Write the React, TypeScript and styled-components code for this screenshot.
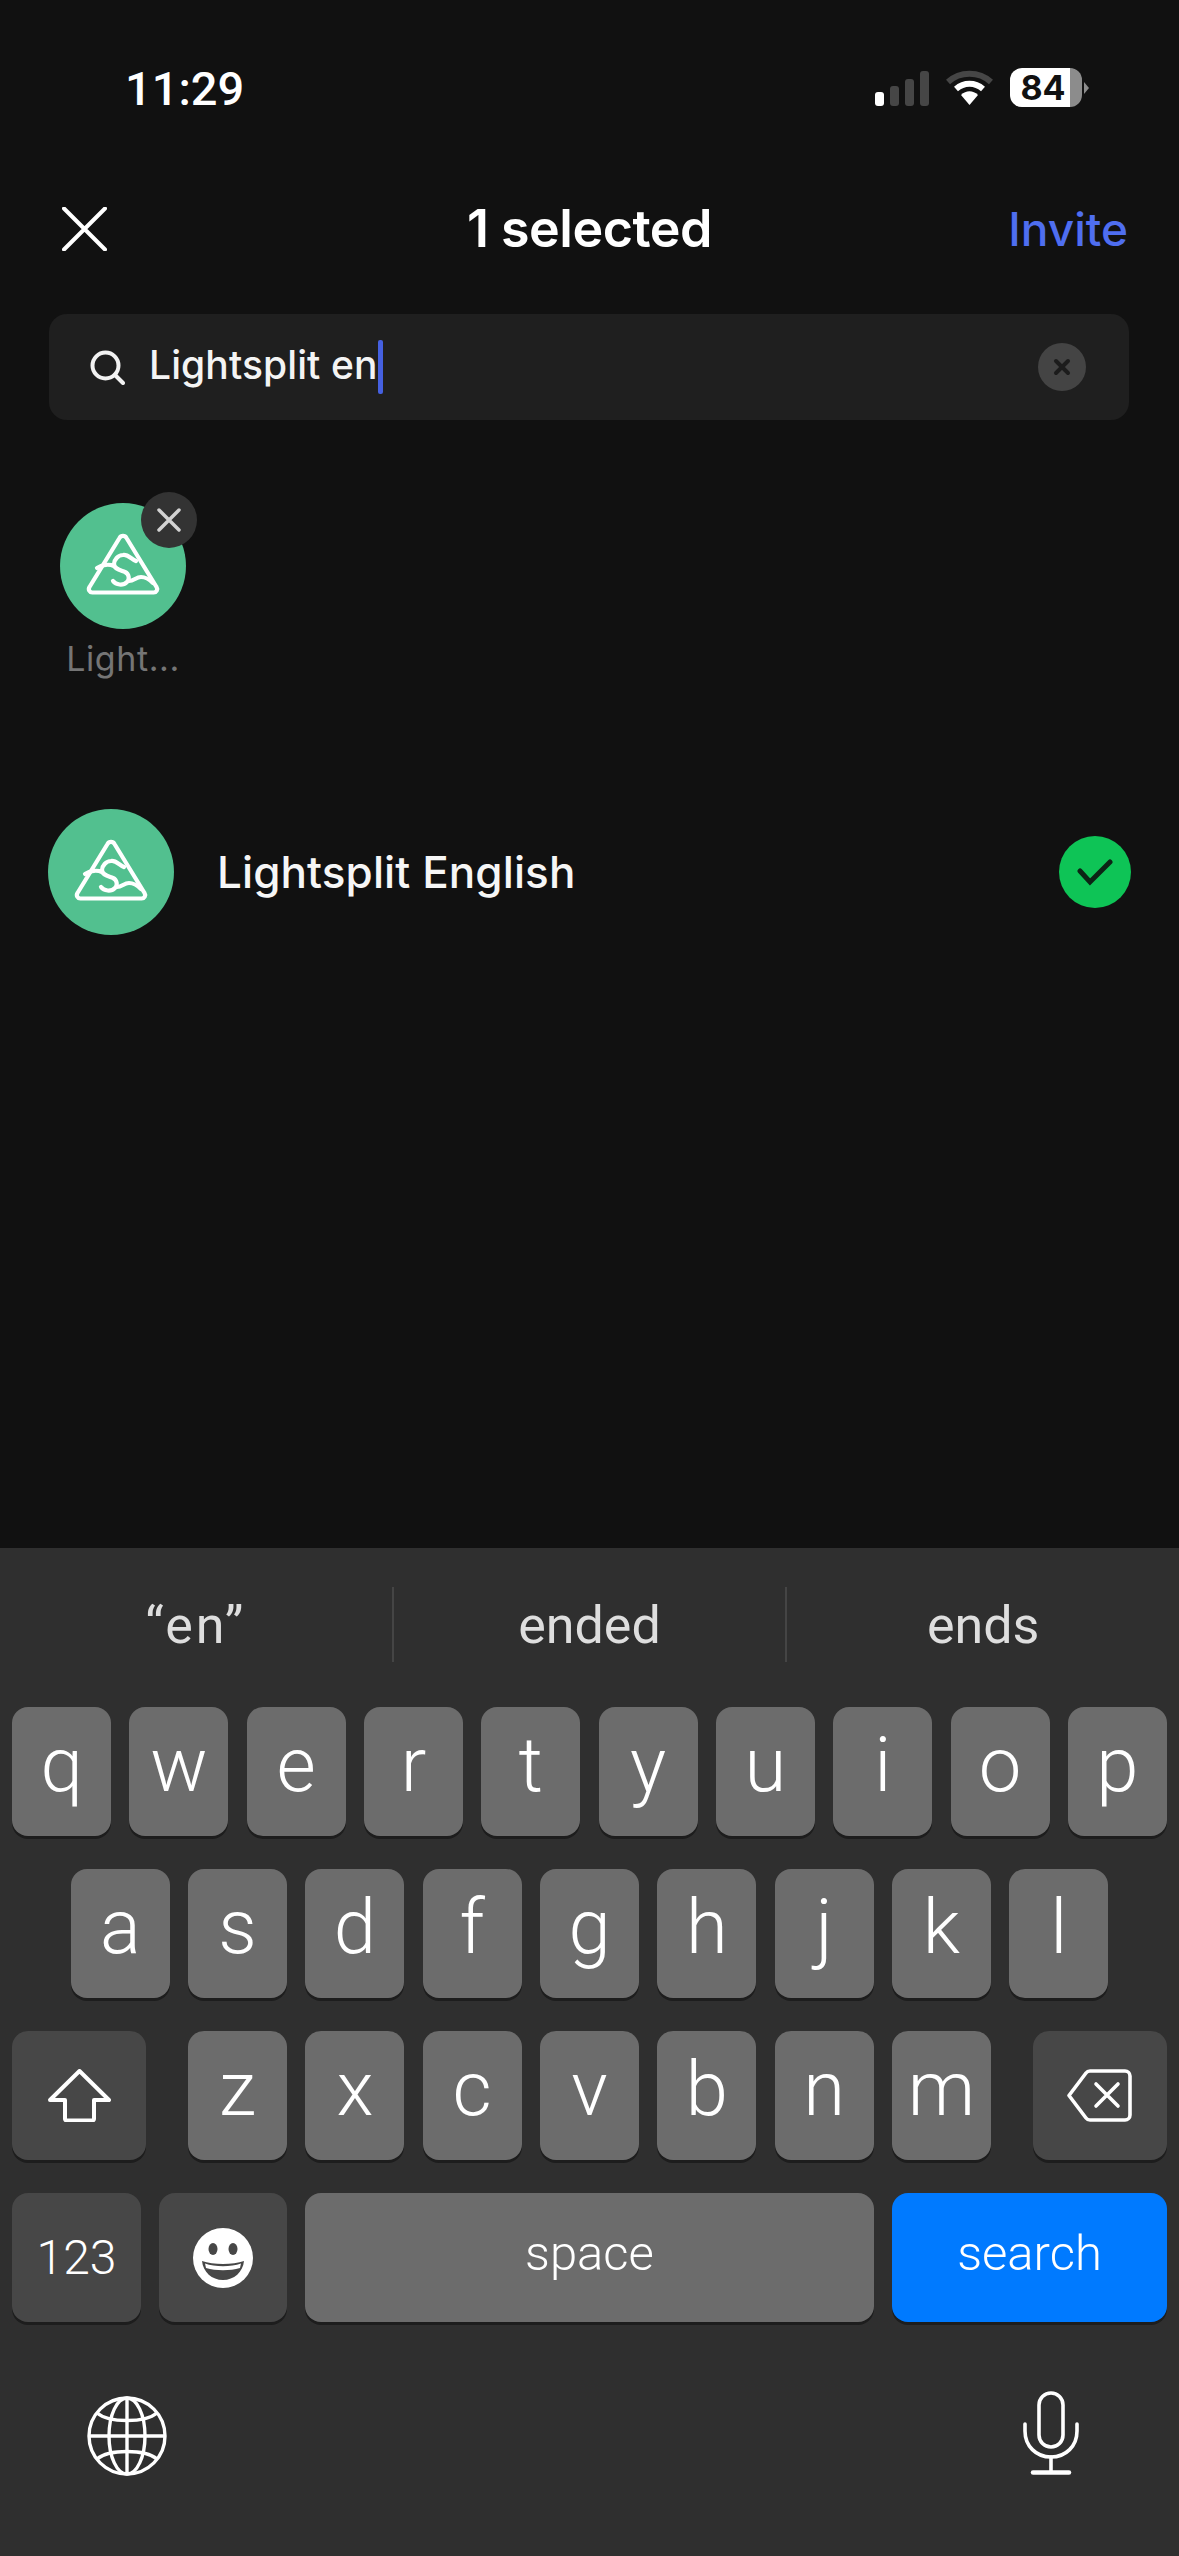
import React from 'react';
import styled, { createGlobalStyle } from 'styled-components';

const GlobalStyle = createGlobalStyle`
  html, body {
    margin: 0;
    padding: 0;
    background: #111111;
  }
  * {
    box-sizing: border-box;
  }
`;

const Page = styled.div`
  width: 1179px;
  height: 2556px;
  display: flex;
  flex-direction: column;
  overflow: hidden;
  background: #111111;
  color: #ffffff;
  font-family: 'Inter', 'Liberation Sans', sans-serif;
`;

const StatusBar = styled.div`
  height: 197px;
  padding: 68px 97px 0 125px;
  display: flex;
  justify-content: space-between;
  align-items: flex-start;
`;

const Clock = styled.div`
  font-family: 'Roboto', sans-serif;
  font-size: 47px;
  font-weight: 500;
  line-height: 41px;
`;

const StatusIcons = styled.div`
  display: flex;
  align-items: center;
  height: 39px;
  gap: 17px;
`;

const Signal = styled.div`
  display: flex;
  align-items: flex-end;
  gap: 6px;
  height: 35px;
  margin-top: 2px;
`;

const SignalBar = styled.div<{ $height: number; $on?: boolean }>`
  width: 9px;
  height: ${p => p.$height}px;
  border-radius: 3px;
  background: ${p => (p.$on ? '#ffffff' : '#464646')};
`;

const Battery = styled.div`
  position: relative;
  width: 72px;
  height: 39px;
  border-radius: 12px;
  background: linear-gradient(to right, #ffffff 0, #ffffff 60px, #8c8c8c 60px);
  color: #111111;
  font-family: 'Inter', sans-serif;
  font-size: 34px;
  font-weight: 700;
  line-height: 39px;
  text-align: center;
  padding-right: 6px;

  &::after {
    content: '';
    position: absolute;
    left: 74px;
    top: 14px;
    border-left: 5px solid #8c8c8c;
    border-top: 6px solid transparent;
    border-bottom: 6px solid transparent;
  }
`;

const Header = styled.div`
  height: 60px;
  padding: 0 51px 2px;
  display: grid;
  grid-template-columns: 1fr auto 1fr;
  align-items: center;
`;

const CloseIcon = styled.svg`
  margin-left: 11px;
`;

const Title = styled.div`
  font-size: 52px;
  font-weight: 600;
  letter-spacing: -0.5px;
`;

const InviteLink = styled.div`
  justify-self: end;
  font-size: 46px;
  font-weight: 500;
  color: #4f6ef0;
`;

const SearchBar = styled.div`
  margin: 57px 50px 0 49px;
  height: 106px;
  padding: 0 43px 0 41px;
  display: flex;
  align-items: center;
  border-radius: 18px;
  background: #1f1f1f;
`;

const SearchText = styled.div`
  margin-left: 24px;
  padding-bottom: 5px;
  font-size: 39px;
  font-weight: 500;
  letter-spacing: 0.1px;
  color: #f4f4f4;
`;

const Caret = styled.div`
  width: 5px;
  height: 54px;
  border-radius: 2px;
  background: #4560e0;
`;

const ClearButton = styled.div`
  margin-left: auto;
  width: 48px;
  height: 48px;
  border-radius: 50%;
  background: #444444;
  display: flex;
  align-items: center;
  justify-content: center;
`;

const Chips = styled.div`
  padding: 83px 0 0 60px;
  height: 389px;
`;

const Chip = styled.div`
  position: relative;
  width: 126px;
  display: flex;
  flex-direction: column;
  align-items: center;
`;

const ChipLabel = styled.div`
  margin-top: 10px;
  font-size: 34px;
  line-height: 40px;
  color: #757575;
  letter-spacing: 0.6px;
  white-space: nowrap;
`;

const RemoveBadge = styled.div`
  position: absolute;
  left: 81px;
  top: -11px;
  width: 56px;
  height: 56px;
  border-radius: 50%;
  background: #333333;
  display: flex;
  align-items: center;
  justify-content: center;
`;

const ResultRow = styled.div`
  padding: 0 48px;
  height: 126px;
  display: flex;
  align-items: center;
`;

const ResultName = styled.div`
  margin-left: 43px;
  font-size: 44px;
  font-weight: 500;
  letter-spacing: 0.1px;
  color: #f6f6f6;
`;

const CheckMark = styled.div`
  margin-left: auto;
  width: 72px;
  height: 72px;
  border-radius: 50%;
  background: #0ec456;
  display: flex;
  align-items: center;
  justify-content: center;
`;

const Keyboard = styled.div`
  margin-top: auto;
  height: 1008px;
  background: #2f2f2f;
  display: flex;
  flex-direction: column;
  font-family: 'Roboto', sans-serif;
`;

const Suggestions = styled.div`
  height: 159px;
  padding-top: 39px;
  display: flex;
  align-items: flex-start;
`;

const Suggestion = styled.div<{ $divided?: boolean; $quoted?: boolean }>`
  flex: 1;
  height: 75px;
  display: flex;
  align-items: center;
  justify-content: center;
  padding-top: 2px;
  font-size: 52px;
  font-weight: 400;
  letter-spacing: ${p => (p.$quoted ? '3px' : '0')};
  color: #dedede;
  border-left: ${p => (p.$divided ? '2px solid #454545' : 'none')};
`;

const KeyRows = styled.div`
  display: flex;
  flex-direction: column;
  gap: 33px;
`;

const KeyRow = styled.div<{ $gap: number }>`
  display: flex;
  justify-content: center;
  gap: ${p => p.$gap}px;
`;

const Key = styled.div<{ $width?: number; $tone?: 'light' | 'dark' | 'blue'; $size?: number }>`
  width: ${p => p.$width ?? 99}px;
  height: 129px;
  border-radius: 16px;
  display: flex;
  align-items: center;
  justify-content: center;
  background: ${p => (p.$tone === 'dark' ? '#474747' : p.$tone === 'blue' ? '#007aff' : '#6c6c6c')};
  box-shadow: 0 3px 0 #1d1d1d;
  color: #ffffff;
  font-size: ${p => p.$size ?? 76}px;
  font-weight: 300;
  padding-bottom: ${p => (p.$size ? 8 : 13)}px;
`;

const CenteredKey = styled(Key)`
  padding-bottom: 0;
`;

const BottomIcons = styled.div`
  padding: 69px 100px 0 87px;
  display: flex;
  justify-content: space-between;
  align-items: flex-start;
`;

const GlobeIcon = styled.svg`
  margin-top: 5px;
`;

const Logo = ({ size }: { size: number }) => (
  <svg width={size} height={size} viewBox="0 0 126 126">
    <circle cx="63" cy="63" r="63" fill="#52c08f" />
    <g fill="none" stroke="#ffffff" strokeWidth="4.2" strokeLinecap="round" strokeLinejoin="round">
      <path d="M59.5 35 a4 4 0 0 1 7 0 L96.5 84 a3.5 3.5 0 0 1 -3 5.5 H32.5 a3.5 3.5 0 0 1 -3 -5.5 Z" />
      <path d="M76 58 C71 56 68 51 63 52 C58 52 54 57 54 61 C54 66 60 67 65 69 C69 71 70 76 67 79 C63 83 56 82 53 78" />
      <path d="M37 65 C42 62 49 61 54 63" />
      <path d="M69 78 C74 78 76 74 81 74 C86 74 90 77 93 80" />
    </g>
  </svg>
);

const topRow = ['q', 'w', 'e', 'r', 't', 'y', 'u', 'i', 'o', 'p'];
const middleRow = ['a', 's', 'd', 'f', 'g', 'h', 'j', 'k', 'l'];
const bottomRow = ['z', 'x', 'c', 'v', 'b', 'n', 'm'];

const App: React.FC = () => {
  return (
    <Page>
      <GlobalStyle />
      <StatusBar>
        <Clock>11:29</Clock>
        <StatusIcons>
          <Signal>
            <SignalBar $height={14} $on />
            <SignalBar $height={20} />
            <SignalBar $height={27} />
            <SignalBar $height={35} />
          </Signal>
          <svg width="47" height="35" viewBox="0 0 47 35">
            <path d="M2 12 C14 1 33 1 45 12" fill="none" stroke="#464646" strokeWidth="6" />
            <path d="M10 19 C18 12 29 12 37 19" fill="none" stroke="#ffffff" strokeWidth="6" />
            <path d="M15 25 C20 20 27 20 32 25 L23.5 35 Z" fill="#ffffff" />
          </svg>
          <Battery>84</Battery>
        </StatusIcons>
      </StatusBar>

      <Header>
        <CloseIcon width="45" height="44" viewBox="0 0 45 44">
          <path d="M2 1.5 L43 42.5 M43 1.5 L2 42.5" stroke="#ffffff" strokeWidth="4" strokeLinecap="round" />
        </CloseIcon>
        <Title>1 selected</Title>
        <InviteLink>Invite</InviteLink>
      </Header>

      <SearchBar>
        <svg width="35" height="35" viewBox="0 0 35 35">
          <circle cx="15.5" cy="15.5" r="13" fill="none" stroke="#f2f2f2" strokeWidth="4" />
          <path d="M25 25 L33 33" stroke="#f2f2f2" strokeWidth="4" strokeLinecap="round" />
        </svg>
        <SearchText>Lightsplit en</SearchText>
        <Caret />
        <ClearButton>
          <svg width="18" height="18" viewBox="0 0 18 18">
            <path d="M3 3 L15 15 M15 3 L3 15" stroke="#1c1c1c" strokeWidth="4" strokeLinecap="round" />
          </svg>
        </ClearButton>
      </SearchBar>

      <Chips>
        <Chip>
          <Logo size={126} />
          <RemoveBadge>
            <svg width="24" height="24" viewBox="0 0 24 24">
              <path d="M2 2 L22 22 M22 2 L2 22" stroke="#d2d2d2" strokeWidth="3.5" strokeLinecap="round" />
            </svg>
          </RemoveBadge>
          <ChipLabel>Light...</ChipLabel>
        </Chip>
      </Chips>

      <ResultRow>
        <Logo size={126} />
        <ResultName>Lightsplit English</ResultName>
        <CheckMark>
          <svg width="36" height="28" viewBox="0 0 36 28">
            <path d="M3 13 L13 24 L33 4" fill="none" stroke="#0c2415" strokeWidth="5" strokeLinecap="round" />
          </svg>
        </CheckMark>
      </ResultRow>

      <Keyboard>
        <Suggestions>
          <Suggestion $quoted>“en”</Suggestion>
          <Suggestion $divided>ended</Suggestion>
          <Suggestion $divided>ends</Suggestion>
        </Suggestions>
        <KeyRows>
          <KeyRow $gap={18.3}>
            {topRow.map(letter => (
              <Key key={letter}>{letter}</Key>
            ))}
          </KeyRow>
          <KeyRow $gap={18.3}>
            {middleRow.map(letter => (
              <Key key={letter}>{letter}</Key>
            ))}
          </KeyRow>
          <KeyRow $gap={42}>
            <CenteredKey $width={134} $tone="dark">
              <svg width="63" height="53" viewBox="0 0 63 53">
                <path
                  d="M31.5 2 L61 31 H46 V50 a1.5 1.5 0 0 1 -1.5 1.5 H18.5 a1.5 1.5 0 0 1 -1.5 -1.5 V31 H2 Z"
                  fill="none"
                  stroke="#ffffff"
                  strokeWidth="4"
                  strokeLinejoin="round"
                />
              </svg>
            </CenteredKey>
            <KeyRow $gap={18.3}>
              {bottomRow.map(letter => (
                <Key key={letter}>{letter}</Key>
              ))}
            </KeyRow>
            <CenteredKey $width={134} $tone="dark">
              <svg width="65" height="53" viewBox="0 0 65 53">
                <path
                  d="M23 2 H58 a5 5 0 0 1 5 5 V46 a5 5 0 0 1 -5 5 H23 a5 5 0 0 1 -4 -2 L2 26.5 L19 4 a5 5 0 0 1 4 -2 Z"
                  fill="none"
                  stroke="#ffffff"
                  strokeWidth="3.6"
                  strokeLinejoin="round"
                />
                <path d="M29 15 L51 37 M51 15 L29 37" stroke="#ffffff" strokeWidth="3.6" strokeLinecap="round" />
              </svg>
            </CenteredKey>
          </KeyRow>
          <KeyRow $gap={18}>
            <CenteredKey $width={129} $tone="dark" $size={48}>123</CenteredKey>
            <CenteredKey $width={128} $tone="dark">
              <svg width="60" height="60" viewBox="0 0 60 60">
                <circle cx="30" cy="30" r="30" fill="#ffffff" />
                <ellipse cx="20" cy="21" rx="4.5" ry="6" fill="#474747" />
                <ellipse cx="40" cy="21" rx="4.5" ry="6" fill="#474747" />
                <path d="M9 33 C20 37 40 37 51 33 C50 44 41 52 30 52 C19 52 10 44 9 33 Z" fill="#474747" />
                <path d="M12 35.5 C22 39 38 39 48 35.5 L47 40 C37 43 23 43 13 40 Z" fill="#ffffff" />
              </svg>
            </CenteredKey>
            <Key $width={569} $size={49}>space</Key>
            <Key $width={275} $tone="blue" $size={49}>search</Key>
          </KeyRow>
        </KeyRows>
        <BottomIcons>
          <GlobeIcon width="80" height="80" viewBox="0 0 80 80" fill="none" stroke="#ffffff" strokeWidth="3.4">
            <circle cx="40" cy="40" r="38" />
            <ellipse cx="40" cy="40" rx="18" ry="38" />
            <path d="M40 2 V78 M2 40 H78" />
            <path d="M10 17 C22 27 58 27 70 17 M10 63 C22 53 58 53 70 63" />
          </GlobeIcon>
          <svg width="56" height="84" viewBox="0 0 56 84" fill="none" stroke="#ffffff" strokeLinecap="round">
            <rect x="16" y="2" width="24" height="54" rx="12" strokeWidth="3.6" />
            <path d="M2 33 V40 C2 55 13 66 28 66 C43 66 54 55 54 40 V33" strokeWidth="3.6" />
            <path d="M28 66 V81" strokeWidth="3.6" />
            <path d="M10 81.5 H46" strokeWidth="4.5" />
          </svg>
        </BottomIcons>
      </Keyboard>
    </Page>
  );
};

export default App;
